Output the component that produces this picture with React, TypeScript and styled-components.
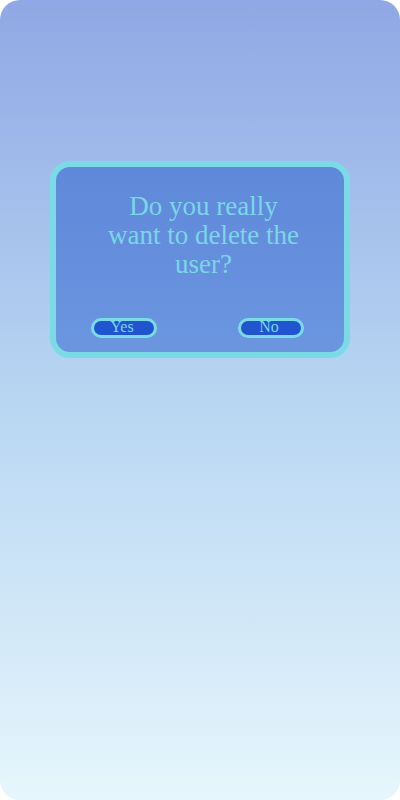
import React from "react";
import styled, { createGlobalStyle } from "styled-components";

const Global = createGlobalStyle`
  html, body { margin: 0; padding: 0; background: #ffffff; }
  body { font-family: "Liberation Serif", "DejaVu Serif", serif; }
`;

const Screen = styled.div`
  width: 400px;
  height: 800px;
  border-radius: 20px;
  overflow: hidden;
  background: linear-gradient(180deg, #8fa8e5 0%, #b8d6f2 50%, #e6f6fc 100%);
  display: flex;
  flex-direction: column;
  align-items: center;
  padding-top: 161px;
  box-sizing: border-box;
`;

const Dialog = styled.div`
  width: 300px;
  height: 197px;
  box-sizing: border-box;
  border: 6px solid #7adbe7;
  border-radius: 20px;
  background: linear-gradient(180deg, #5f88da 0%, #6b96df 100%);
  display: flex;
  flex-direction: column;
  align-items: center;
  padding: 25px 40px 0 35px;
`;

const Message = styled.p`
  margin: 0 0 0 12px;
  width: 196px;
  text-align: center;
  color: #7ad6e8;
  font-size: 27px;
  line-height: 29px;
`;

const Actions = styled.div`
  align-self: stretch;
  display: flex;
  justify-content: space-between;
  margin-top: 39px;
`;

const ActionButton = styled.button`
  width: 66px;
  height: 20px;
  box-sizing: border-box;
  border: 3px solid #7adbe7;
  border-radius: 10px;
  background: #2155d0;
  color: #7ad6e8;
  font-family: "Liberation Serif", "DejaVu Serif", serif;
  font-size: 16px;
  line-height: 14px;
  padding: 0 4px 2px 0;
  display: flex;
  align-items: center;
  justify-content: center;
`;

export default function App() {
  return (
    <>
      <Global />
      <Screen>
        <Dialog>
          <Message>Do you really want to delete the user?</Message>
          <Actions>
            <ActionButton>Yes</ActionButton>
            <ActionButton>No</ActionButton>
          </Actions>
        </Dialog>
      </Screen>
    </>
  );
}
